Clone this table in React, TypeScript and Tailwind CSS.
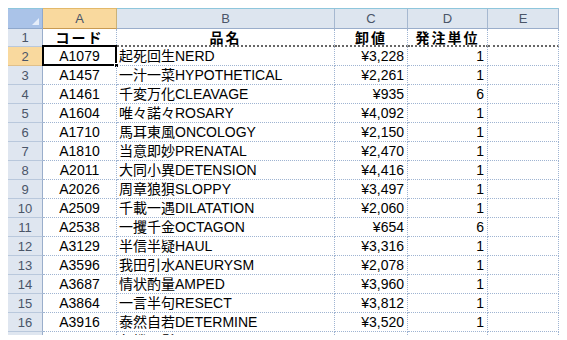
import React from "react";

type Row = { code: string; name: string; price: string; unit: string };

const rows: Row[] = [
  { code: "A1079", name: "起死回生NERD", price: "¥3,228", unit: "1" },
  { code: "A1457", name: "一汁一菜HYPOTHETICAL", price: "¥2,261", unit: "1" },
  { code: "A1461", name: "千変万化CLEAVAGE", price: "¥935", unit: "6" },
  { code: "A1604", name: "唯々諾々ROSARY", price: "¥4,092", unit: "1" },
  { code: "A1710", name: "馬耳東風ONCOLOGY", price: "¥2,150", unit: "1" },
  { code: "A1810", name: "当意即妙PRENATAL", price: "¥2,470", unit: "1" },
  { code: "A2011", name: "大同小異DETENSION", price: "¥4,416", unit: "1" },
  { code: "A2026", name: "周章狼狽SLOPPY", price: "¥3,497", unit: "1" },
  { code: "A2509", name: "千載一遇DILATATION", price: "¥2,060", unit: "1" },
  { code: "A2538", name: "一攫千金OCTAGON", price: "¥654", unit: "6" },
  { code: "A3129", name: "半信半疑HAUL", price: "¥3,316", unit: "1" },
  { code: "A3596", name: "我田引水ANEURYSM", price: "¥2,078", unit: "1" },
  { code: "A3687", name: "情状酌量AMPED", price: "¥3,960", unit: "1" },
  { code: "A3864", name: "一言半句RESECT", price: "¥3,812", unit: "1" },
  { code: "A3916", name: "泰然自若DETERMINE", price: "¥3,520", unit: "1" },
  { code: "A4034", name: "危機一髪CARDIAC", price: "¥3,631", unit: "1" },
];

const cols = ["A", "B", "C", "D", "E"];

// light dithered-looking gridline on every cell
const cell =
  "h-full min-h-0 leading-none border-r border-b border-dotted border-[#9fb4d2] flex items-center overflow-hidden whitespace-nowrap";
const head = "font-bold text-[14px] tracking-[2px] pt-[1px] border-b-2 border-b-[#666]";

function ColHeader({ label, active }: { label: string; active?: boolean }) {
  return (
    <div
      className={[
        "h-full flex items-center justify-center border-r border-t border-b text-[13px] leading-none text-[#4a5568]",
        active
          ? "bg-[#f9d99e] border-r-[#c9b27a] border-t-[#e3b96a] border-b-[#c89a52]"
          : "bg-[#dde5ef] border-r-[#a6b8d0] border-t-[#8ec6dc] border-b-[#9aaecb]",
      ].join(" ")}
    >
      {label}
    </div>
  );
}

function RowHeader({ n, active }: { n: number; active?: boolean }) {
  return (
    <div
      className={[
        "h-full flex items-center justify-center border-r border-b text-[13px] leading-none text-[#4a5568]",
        active
          ? "bg-[#f9d99e] border-r-[#c89a52] border-b-[#e0c08a]"
          : "bg-[#dfe6f0] border-r-[#9aaecb] border-b-[#b9c8dc]",
      ].join(" ")}
    >
      {n}
    </div>
  );
}

export default function App() {
  return (
    <div className="w-[567px] h-[340px] bg-white pt-[8px] pl-[8px]">
      <div
        className="w-[551px] h-[327px] overflow-hidden text-[14px] text-black"
        style={{ fontFamily: "'Liberation Sans','Noto Sans CJK JP',sans-serif" }}
      >
        <div className="grid grid-cols-[35px_74px_218px_73px_80px_71px] grid-rows-[21px_18px_repeat(16,19px)]">
          {/* column headers */}
          <div className="h-full bg-[#aac3e8] border-r border-t border-b border-t-[#8ec6dc] border-r-[#8fa8cc] border-b-[#8fa8cc] flex items-end justify-end pr-[3px] pb-[3px]">
            <div className="w-0 h-0 border-l-[7px] border-l-transparent border-b-[7px] border-b-[#e6eefa]" />
          </div>
          {cols.map((c) => (
            <ColHeader key={c} label={c} active={c === "A"} />
          ))}

          {/* row 1: field names */}
          <RowHeader n={1} />
          <div className={`${cell} ${head} justify-center`}>コード</div>
          <div className={`${cell} ${head} justify-center`}>品名</div>
          <div className={`${cell} ${head} justify-center`}>卸値</div>
          <div className={`${cell} ${head} justify-center`}>発注単位</div>
          <div className={`${cell} border-b-2 border-b-[#666]`} />

          {rows.map((r, i) => {
            const n = i + 2;
            return (
              <React.Fragment key={r.code}>
                <RowHeader n={n} active={n === 2} />
                <div className={`${cell} justify-center relative overflow-visible`}>
                  {r.code}
                  {n === 2 && (
                    <>
                      <div className="absolute -top-[2px] -left-px -right-px -bottom-px border-2 border-black" />
                      <div className="absolute -right-[3px] -bottom-[3px] w-[5px] h-[5px] bg-black border border-white" />
                    </>
                  )}
                </div>
                <div className={`${cell} pl-[2px]`}>{r.name}</div>
                <div className={`${cell} justify-end pr-[3px]`}>{r.price}</div>
                <div className={`${cell} justify-end pr-[3px]`}>{r.unit}</div>
                <div className={cell} />
              </React.Fragment>
            );
          })}
        </div>
      </div>
    </div>
  );
}
